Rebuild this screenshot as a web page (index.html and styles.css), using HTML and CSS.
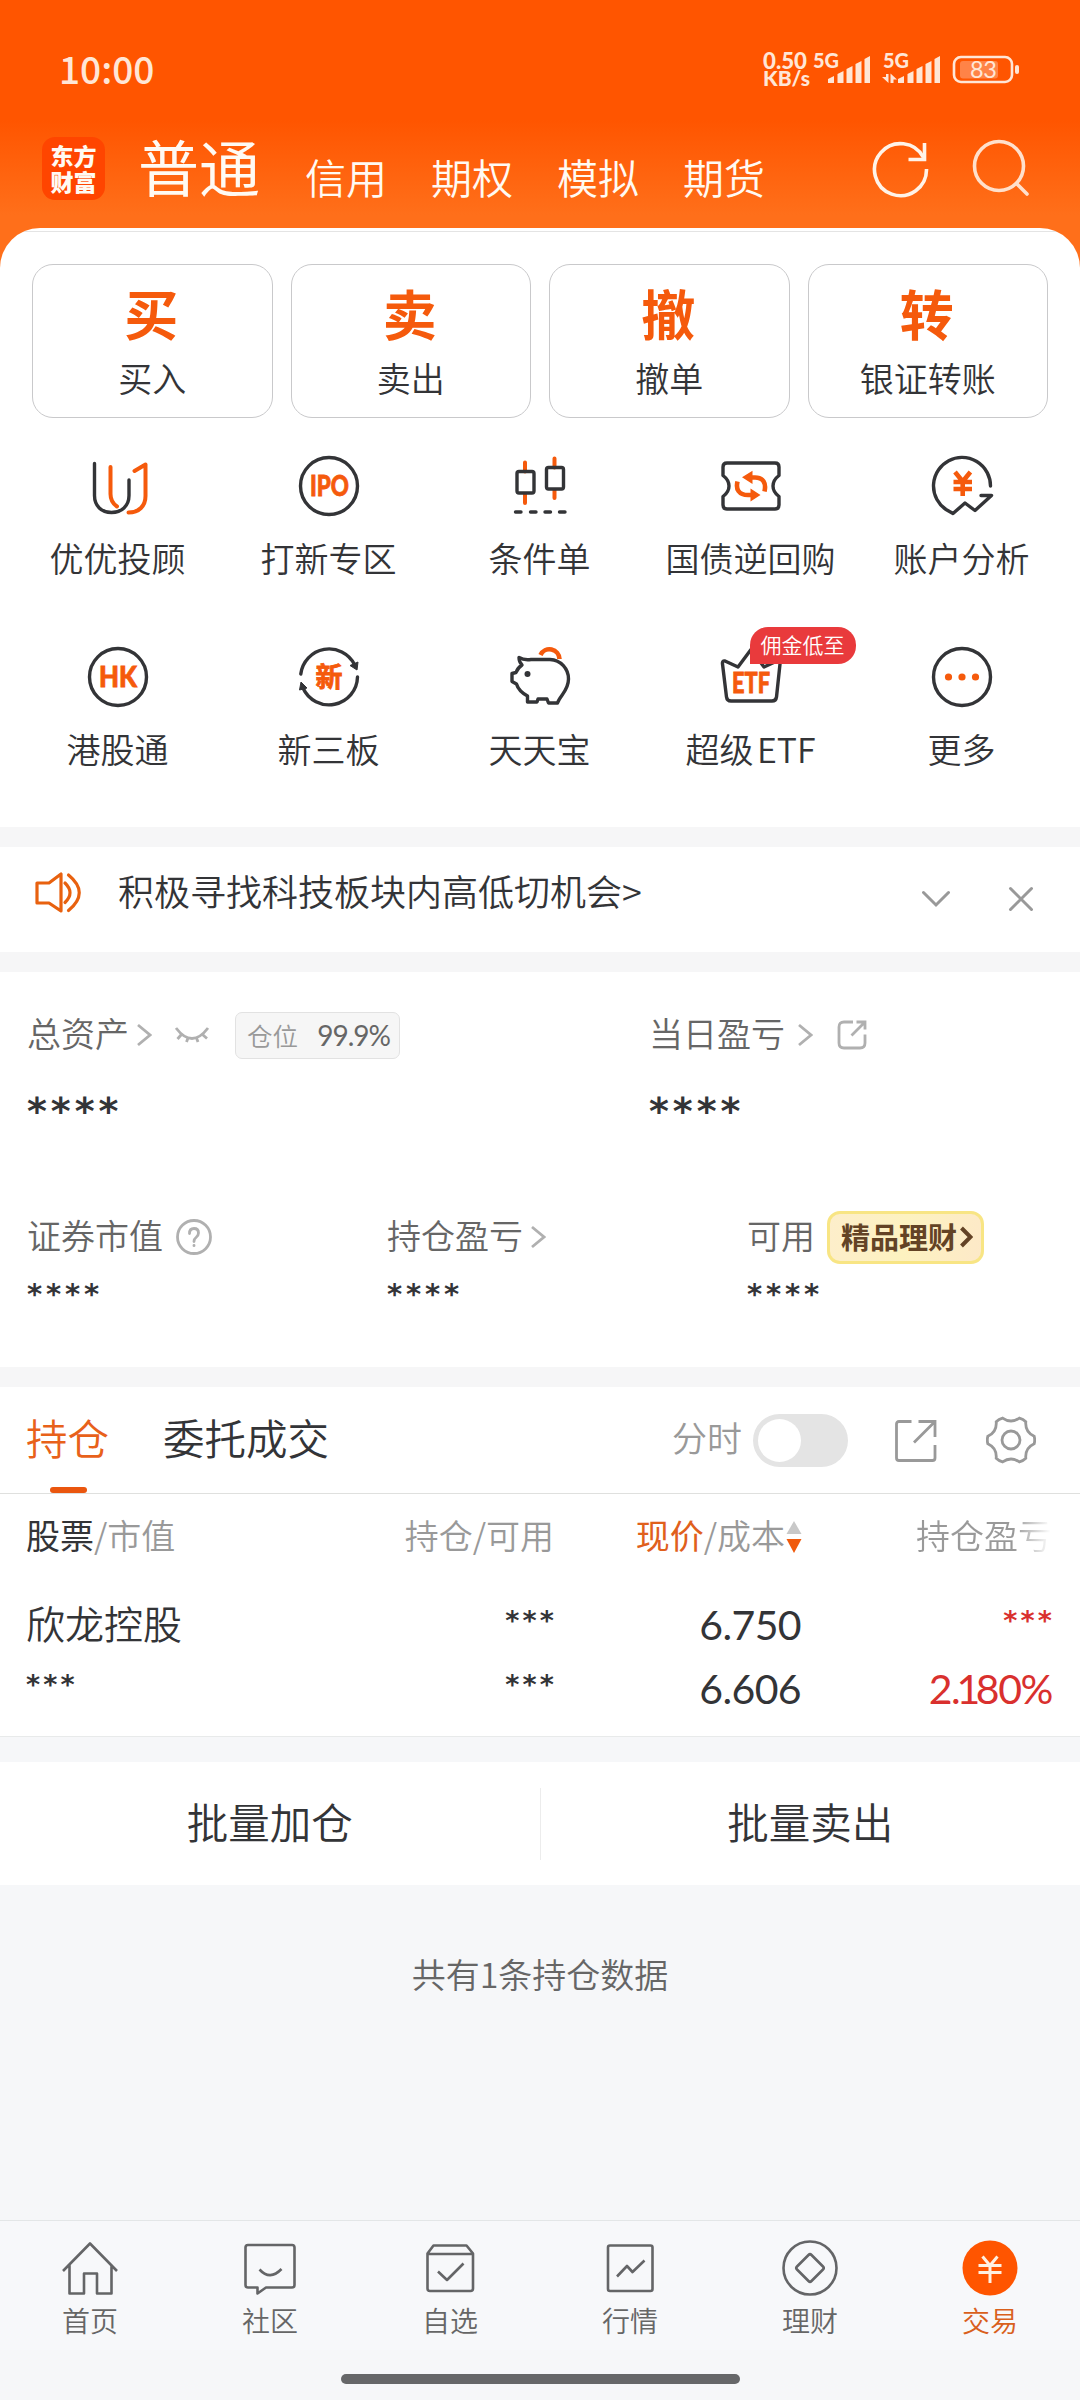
FILE: index.html
```html
<!DOCTYPE html>
<html lang="zh-CN">
<head>
<meta charset="utf-8">
<title>交易</title>
<link rel="stylesheet" href="styles.css">
</head>
<body>
<div class="app">
  <header class="header">
    <div class="status">
      <span class="clock">10:00</span>
      <svg class="status-icons" width="260" height="40" viewBox="0 0 260 40">
        <g class="st-bold">
          <text x="1" y="18.500" font-size="22" textLength="44" lengthAdjust="spacingAndGlyphs">0.50</text>
          <text x="1" y="36" font-size="20" textLength="47" lengthAdjust="spacingAndGlyphs">KB/s</text>
          <text x="51" y="18" font-size="20" textLength="26" lengthAdjust="spacingAndGlyphs">5G</text>
          <text x="121" y="18" font-size="20" textLength="26" lengthAdjust="spacingAndGlyphs">5G</text>
        </g>
        <path fill="#ffe6d6" d="M66 33v-4l6-3v7zM75.500 33V24l6-3v12zM84.500 33V19l6-3v17zM93.500 33V14l6-3v22zM102.500 33V9l5.500-3v27zM136 33v-4l6-3v7zM145.500 33V24l6-3v12zM154.500 33V19l6-3v17zM163.500 33V14l6-3v22zM172.500 33V9l5.500-3v27z"/>
        <path fill="#ffe6d6" d="M124 24h2.500v9l-6.500-6h4zM128.500 33v-9.500l6.500 6h-3.500V33z"/>
        <rect x="192" y="7" width="58" height="25" rx="7" fill="none" stroke="#ffe6d6" stroke-width="2.600"/>
        <rect x="198" y="11" width="38" height="17.500" rx="3" fill="#ff8347"/>
        <rect x="253" y="15" width="4" height="9" rx="2" fill="#ffe6d6"/>
        <text class="st-num" x="208" y="28" font-size="23.500" textLength="27">83</text>
      </svg>
    </div>
    <nav class="topnav">
      <div class="logo"><span>东方</span><span>财富</span></div>
      <span class="cur">普通</span>
      <span class="alt">信用</span><span class="alt">期权</span><span class="alt">模拟</span><span class="alt">期货</span>
      <svg class="refresh" width="60" height="60" viewBox="0 0 60 60" fill="none" stroke="#fff3e8" stroke-width="3.600"><path d="M56.500 30A26 26 0 1 1 53.500 18.500"/><path d="M54.500 4v16.500H38.500"/></svg>
      <svg class="search" width="60" height="60" viewBox="0 0 60 60" fill="none" stroke="#ffe0cc" stroke-width="3.600" stroke-linecap="round"><circle cx="28" cy="27" r="24.500"/><path d="M45.500 44.500L56 55"/></svg>
    </nav>
  </header>

  <section class="sheet">
    <div class="cards">
      <div class="card"><b>买</b><span>买入</span></div>
      <div class="card"><b>卖</b><span>卖出</span></div>
      <div class="card"><b>撤</b><span>撤单</span></div>
      <div class="card"><b>转</b><span>银证转账</span></div>
    </div>
    <div class="grid">
      <div class="item">
        <svg class="ico" viewBox="0 0 60 60"><path class="k" d="M6.500 7.500V39.500C6.500 50 13.500 56.500 23.500 56.500S41 50 41 39.500V24"/><path class="o" d="M22.500 11V38C22.500 44 24.500 47.500 29 50.500M46.500 15L57.500 8.500V40C57.500 50 51 56.500 40.500 56.500"/></svg>
        <span>优优投顾</span></div>
      <div class="item">
        <svg class="ico" viewBox="0 0 60 60"><circle class="k" cx="30" cy="30" r="28.500"/><text class="it" x="11" y="40" textLength="39" lengthAdjust="spacingAndGlyphs">IPO</text></svg>
        <span>打新专区</span></div>
      <div class="item">
        <svg class="ico" viewBox="0 0 60 60"><path class="o" d="M15 6.500v9M15 38v9M44.500 2.500v9M44.500 34v8"/><rect class="k" x="7" y="15.500" width="17" height="21.500" rx="2"/><rect class="k" x="36.500" y="11.500" width="17" height="21.500" rx="2"/><path class="k" d="M5.500 56h5.500M20.500 56h5.500M35 56h5.500M49.500 56H55"/></svg>
        <span>条件单</span></div>
      <div class="item">
        <svg class="ico" viewBox="0 0 60 60"><path class="k" d="M6 7H54Q58 7 58 11V19.500Q52 24 52 30T58 40.500V49Q58 53 54 53H6Q2 53 2 49V40.500Q8 36 8 30T2 19.500V11Q2 7 6 7Z"/><path class="o w" d="M28 21.500H34C42 21.500 45.500 27 43.500 35.500M33 39H27C18 39 14.500 33.500 16.500 25.500"/><path fill="#f55a0c" d="M21 21.300L31.500 14.800V28zM39.500 39L29.500 32.500V45.500z"/></svg>
        <span>国债逆回购</span></div>
      <div class="item">
        <svg class="ico" viewBox="0 0 60 60"><path class="k" d="M58.500 30A28.500 28.500 0 1 0 14 53.500L21 57.500L33 47L43 54.500L59.500 39.500H49"/><path class="o w" d="M23 16l7.700 9.500 7.700-9.500M21.500 26h18.500M21.500 33h18.500M30.700 25v15"/></svg>
        <span>账户分析</span></div>
      <div class="item">
        <svg class="ico" viewBox="0 0 60 60"><circle class="k" cx="30" cy="30" r="28.500"/><text class="it" x="11" y="40" textLength="38" lengthAdjust="spacingAndGlyphs">HK</text></svg>
        <span>港股通</span></div>
      <div class="item">
        <svg class="ico" viewBox="0 0 60 60"><path class="k" d="M1.800 27A28.500 28.500 0 0 1 55.500 17.500M58.500 30A28.500 28.500 0 0 1 4 41"/><path fill="#333437" stroke="#333437" stroke-linejoin="round" d="M58 23L51 18.500L59 15zM2 35L8 41L0.500 43z"/><text class="it cn" x="16.500" y="40">新</text></svg>
        <span>新三板</span></div>
      <div class="item">
        <svg class="ico" viewBox="0 0 60 60"><path class="o w" d="M30.500 8A10 10 0 0 1 49.500 12"/><path class="k" d="M9 10.500Q14 13.500 21 12.500H40C51 13 58.500 22 58.500 32C58.500 44 50 48 47.500 56H38.500L37 52H28L27 55H17.500V49C12 46 8 42 6.500 37L2 34.500V26.500L6 25.500Q7.500 21 12 18Q9 15 9 10.500Z"/><circle cx="17.500" cy="27" r="3" fill="#333437"/></svg>
        <span>天天宝</span></div>
      <div class="item">
        <div class="ico-wrap"><svg class="ico" viewBox="0 0 60 60"><path class="k" d="M4 14L17 20L30 2.500L43 20L56 14Q59.500 13.500 59 17L55.500 50Q55 54 51 54H10Q6 54 5.500 50L1.500 17Q1 13.500 4 14Z"/><text class="it" x="11" y="45.500" textLength="38" lengthAdjust="spacingAndGlyphs">ETF</text></svg><em class="tag">佣金低至</em></div>
        <span>超级 ETF</span></div>
      <div class="item">
        <svg class="ico" viewBox="0 0 60 60"><circle class="k" cx="30" cy="30" r="28.500"/><g fill="#f55a0c"><circle cx="16.500" cy="30" r="3.600"/><circle cx="30" cy="30" r="3.600"/><circle cx="43.500" cy="30" r="3.600"/></g></svg>
        <span>更多</span></div>
    </div>
  </section>

  <section class="notice">
    <svg class="speaker" width="48" height="46" viewBox="0 0 48 46" fill="none" stroke="#e8610f" stroke-width="3.200" stroke-linejoin="round" stroke-linecap="round"><path d="M2 13H14L26 4V41L14 33H2Z"/><path d="M30 13Q40 22.700 30 32.500M33.500 5Q55 22.700 33.500 40.500"/></svg>
    <span class="msg">积极寻找科技板块内高低切机会&gt;</span>
    <svg width="28" height="28" viewBox="0 0 28 28" class="g1"><path d="M1.500 7.500L14 20L26.500 7.500"/></svg>
    <svg width="28" height="28" viewBox="0 0 28 28" class="g1 close"><path d="M3.500 3.500L24.500 24.500M24.500 3.500L3.500 24.500"/></svg>
  </section>

  <section class="assets">
    <div class="pair">
      <div class="cell">
        <div class="lab"><span>总资产</span><svg class="chev" width="16" height="24" viewBox="0 0 16 24"><path d="M2 2L14 12L2 22"/></svg>
          <svg class="eye" width="36" height="24" viewBox="0 0 36 24"><path d="M2 5Q18 26 34 5M7 12L3.500 16M14 15L12.500 19M22.500 15L24 19M29 12L33 15.500"/></svg>
          <span class="pos"><i>仓位</i><em>99.9%</em></span></div>
        <div class="stars big">****</div>
      </div>
      <div class="cell">
        <div class="lab"><span>当日盈亏</span><svg class="chev far" width="16" height="24" viewBox="0 0 16 24"><path d="M2 2L14 12L2 22"/></svg>
          <svg class="share" width="30" height="30" viewBox="0 0 30 30"><path d="M16 2H7Q2 2 2 7V23Q2 28 7 28H23Q28 28 28 23V14.500M14.500 15.500L28 2M19.500 2H28V9.500"/></svg></div>
        <div class="stars big">****</div>
      </div>
    </div>
    <div class="trio">
      <div class="cell">
        <div class="lab"><span>证券市值</span><svg class="help" width="36" height="36" viewBox="0 0 36 36"><circle cx="18" cy="18" r="16.500"/><path d="M13.500 14.500Q13.500 9.500 18 9.500T22.500 14Q22.500 16.500 20 18.500Q18 20 18 22.500"/><path d="M18 26.300v.4"/></svg></div>
        <div class="stars">****</div>
      </div>
      <div class="cell">
        <div class="lab"><span>持仓盈亏</span><svg class="chev" width="16" height="24" viewBox="0 0 16 24"><path d="M2 2L14 12L2 22"/></svg></div>
        <div class="stars">****</div>
      </div>
      <div class="cell">
        <div class="lab"><span>可用</span><span class="gold"><b>精品理财</b><svg width="14" height="24" viewBox="0 0 14 24"><path d="M2.500 3L11.500 12L2.500 21"/></svg></span></div>
        <div class="stars">****</div>
      </div>
    </div>
  </section>

  <section class="holdings">
    <div class="tabs">
      <span class="tab on">持仓</span>
      <span class="tab">委托成交</span>
      <span class="mode">分时</span>
      <span class="switch"><i></i></span>
      <svg class="export" width="44" height="44" viewBox="0 0 44 44"><path d="M17.500 2.500H5Q2.500 2.500 2.500 5V39Q2.500 41.500 5 41.500H38.500Q41 41.500 41 39V26M20 23.500L41 2.500M24.500 2.500H41V18"/></svg>
      <svg class="gear" width="50" height="50" viewBox="0 0 50 50"><path d="M48.200 21.300Q49.200 25 48.200 28.700Q38.900 33 39.800 43.300Q37.200 46 33.400 46.900Q25 41 16.600 46.900Q12.800 46 10.200 43.300Q11.100 33 1.800 28.700Q.8 25 1.800 21.300Q11.100 17 10.200 6.700Q12.800 4 16.600 3.100Q25 9 33.400 3.100Q37.200 4 39.800 6.700Q38.900 17 48.200 21.300Z"/><circle cx="25" cy="25" r="9"/></svg>
    </div>
    <div class="row head">
      <span><b>股票</b>/市值</span>
      <span>持仓/可用</span>
      <span class="price"><b class="hot">现价</b>/成本<svg width="16" height="34" viewBox="0 0 16 34"><path fill="#c8c8c8" d="M8 1L15.500 14H.5z"/><path fill="#f05a0c" d="M8 33L15.500 19H.5z"/></svg></span>
      <span class="fade">持仓盈亏</span>
    </div>
    <div class="row r1">
      <span class="name">欣龙控股</span><span class="st">***</span><span class="num">6.750</span><span class="st red">***</span>
    </div>
    <div class="row r2">
      <span class="st">***</span><span class="st">***</span><span class="num">6.606</span><span class="num red pct">2.<i>1</i>80%</span>
    </div>
  </section>

  <section class="batch"><span>批量加仓</span><i></i><span>批量卖出</span></section>
  <p class="total">共有1条持仓数据</p>

  <footer class="tabbar">
    <div class="tb"><svg viewBox="0 0 60 60"><path d="M3 33L30 5.500L57 33M9.500 27V55.500H24V35.500H37V55.500H51.500V27"/></svg><span>首页</span></div>
    <div class="tb"><svg viewBox="0 0 60 60"><path d="M8 7H52Q54.500 7 54.500 9.500V47Q54.500 49.500 52 49.500H26L17.500 55.500V49.500H8Q5.500 49.500 5.500 47V9.500Q5.500 7 8 7ZM19.500 31.500Q30 43 41.500 31"/></svg><span>社区</span></div>
    <div class="tb"><svg viewBox="0 0 60 60"><path d="M7.500 15.500L13.500 7.500H46.500L53 15.500V50.500Q53 53 50.500 53H10Q7.500 53 7.500 50.500ZM7.500 16H53M18 33.500L27 42L43.500 25.500"/></svg><span>自选</span></div>
    <div class="tb"><svg viewBox="0 0 60 60"><rect x="8" y="7.500" width="44.500" height="45.500" rx="2"/><path d="M17 38.500L27 28L32.500 34L44.500 22.500"/></svg><span>行情</span></div>
    <div class="tb"><svg viewBox="0 0 60 60"><circle cx="30" cy="30" r="26.500"/><path d="M28.500 17Q30 15.500 31.500 17L43 28.500Q44.500 30 43 31.500L31.500 43Q30 44.500 28.500 43L17 31.500Q15.500 30 17 28.500Z"/></svg><span>理财</span></div>
    <div class="tb on"><svg viewBox="0 0 60 60"><circle class="disc" cx="30" cy="30" r="27.500"/><path d="M22.500 18.500L30 27.500L37.500 18.500M18.500 27.500H41.500M18.500 34.500H41.500M30 27.500V45"/></svg><span>交易</span></div>
  </footer>
  <div class="homebar"></div>
</div>
</body>
</html>
```
FILE: styles.css
```css
* { box-sizing: border-box; }
body { margin: 0; background: #f6f7f9; }
.app {
  width: 1080px; height: 2400px; overflow: hidden;
  display: flex; flex-direction: column;
  font-family: "Noto Sans CJK SC", sans-serif; font-weight: 350;
  color: #333437; font-size: 34px; line-height: 1;
  background: linear-gradient(#ff5500 0, #ff5500 120px, #ff6f1a 215px, #ff6f1a 300px, #f6f7f9 300px);
}
.app svg { flex: none; display: block; }
i, em { font-style: normal; }

/* status bar and top navigation */
.header { height: 228px; flex: none; }
.status { height: 120px; padding: 50px 58px 0 59px; display: flex; justify-content: space-between; }
.status-icons { overflow: visible; }
.clock { font: 500 37px/37px "Noto Sans CJK SC", sans-serif; color: #ffe6d6; }
.st-bold { font-family: Lato, sans-serif; font-weight: 900; fill: #ffe6d6; }
.st-num { font-family: Lato, sans-serif; font-weight: 400; fill: #ffe6d6; }
.topnav { height: 108px; display: flex; padding-left: 42px; color: #fffaf3; }
.logo {
  width: 63px; height: 63px; margin-top: 17px; border-radius: 13px; background: #ff4500;
  display: flex; flex-direction: column; align-items: center; padding-top: 5px;
  font-size: 23px; font-weight: 900; line-height: 26px;
}
.cur { font-size: 61px; line-height: 70px; margin: 11px 46px 0 33px; width: 121px; font-weight: 400; white-space: nowrap; }
.alt { font-size: 41px; line-height: 50px; width: 126px; margin-top: 31px; }
.refresh { margin: 19px 0 0 61px; }
.search { margin: 19px 0 0 41px; }

/* rounded sheet with trade shortcuts */
.sheet { background: linear-gradient(#fff 3px, #e4e4e4 3px, #e4e4e4 4px, #fff 4px); border-radius: 40px 40px 0 0; height: 599px; flex: none; padding-top: 36px; }
.cards { display: flex; gap: 18px; padding: 0 32px; }
.card { flex: 1; height: 154px; border: 1px solid #c9c9cb; border-radius: 21px; display: flex; flex-direction: column; align-items: center; }
.card b { font-size: 54px; line-height: 60px; margin: 18px 2px 0 0; color: #f55a0c; font-weight: 700; }
.card span { font-size: 34px; line-height: 40px; margin-top: 15px; }
.grid { display: grid; grid-template-columns: repeat(5, 211px); grid-auto-rows: 191px; padding: 38px 0 0 12px; }
.item { display: flex; flex-direction: column; align-items: center; }
.item > span { font-size: 34px; line-height: 40px; margin-top: 22px; word-spacing: -4px; }
.ico { width: 60px; height: 60px; overflow: visible; }
.ico-wrap { position: relative; }
.k, .o { fill: none; stroke: #333437; stroke-width: 3.4; stroke-linecap: round; stroke-linejoin: round; }
.o { stroke: #f55a0c; stroke-width: 4; }
.o.w { stroke-width: 4.6; stroke-linecap: butt; }
.it { font-family: Lato, sans-serif; font-weight: 900; font-size: 28px; fill: #f55a0c; stroke: #f55a0c; stroke-width: .8; }
.it.cn { font-family: "Noto Sans CJK SC", sans-serif; font-size: 27px; font-weight: 700; }
.tag {
  position: absolute; left: 29px; top: -20px; width: 106px; height: 37px;
  border-radius: 18px 18px 18px 0; background: #e93a3c; color: #fff;
  font-size: 21px; line-height: 35px; text-align: center; white-space: nowrap;
}

/* notice bar */
.notice { height: 145px; flex: none; border: solid #f6f6f7; border-width: 20px 0; background: #fff; display: flex; align-items: flex-start; padding: 23px 45px 0 35px; }
.msg { font-size: 36px; line-height: 40px; margin: 0 auto 0 35px; }
.g1 { fill: none; stroke: #999; stroke-width: 3; stroke-linecap: round; margin-top: 15px; }
.g1.close { margin-left: 57px; }

/* assets summary */
.assets { height: 395px; flex: none; background: #fff; color: #666; padding: 38px 28px 0 27px; }
.pair { display: grid; grid-template-columns: 622px 1fr; height: 202px; }
.trio { display: grid; grid-template-columns: 360px 360px 1fr; }
.lab { display: flex; align-items: center; height: 50px; white-space: nowrap; }
.lab > span:first-child { line-height: 46px; height: 50px; }
.chev, .eye, .share, .help, .export, .gear { fill: none; stroke: #b0b0b0; stroke-width: 2.8; }
.chev { margin-left: 7px; }
.chev.far { margin-left: 12px; }
.eye { margin-left: 22px; }
.share { margin-left: 24px; }
.help { margin-left: 13px; stroke-linecap: round; }
.pos { width: 165px; height: 47px; margin-left: 25px; border: 1px solid #e2e2e2; border-radius: 7px; background: #f6f6f6; display: flex; justify-content: space-between; padding: 0 9px 0 11px; line-height: 43px; font-size: 25.5px; color: #999; }
.pos em { font-family: Lato, sans-serif; font-weight: 400; font-size: 28px; color: #666; line-height: 45px; letter-spacing: -1px; }
.stars, .st { font-family: "DejaVu Sans", sans-serif; font-weight: 700; }
.stars { color: #333437; font-size: 29px; letter-spacing: 3.8px; line-height: 40px; margin-top: 12px; }
.stars.big { font-size: 38px; letter-spacing: 4px; line-height: 50px; margin-top: 26px; }
.gold { margin-left: 12px; width: 157px; height: 53px; border: 3px solid #f8e584; border-radius: 13px; background: linear-gradient(100deg, #fdeecb, #fdf2c0 50%, #fde9c8); display: flex; align-items: center; padding-left: 11px; color: #634325; }
.gold b { font-size: 29px; line-height: 44px; font-weight: 700; margin-top: -3px; }
.gold svg { fill: none; stroke: #634325; stroke-width: 4; margin-left: 2px; }

/* holdings table */
.holdings { height: 370px; flex: none; border: solid #f6f6f7; border-width: 20px 0 0; background: #fff; border-bottom: 1px solid #e8eaea; }
.tabs { height: 107px; border-bottom: 1px solid #dfe0de; display: flex; padding: 0 44px 0 26px; }
.tab { position: relative; font-size: 41.5px; line-height: 50px; padding-top: 25px; margin-right: 54px; }
.tab.on { color: #e8611a; }
.tab.on::after { content: ""; position: absolute; left: 24px; bottom: 0; width: 37px; height: 6px; border-radius: 3px; background: #ea560f; }
.mode { margin-left: auto; font-size: 35px; line-height: 50px; padding-top: 25px; color: #999; }
.switch { width: 95px; height: 53px; margin: 27px 46px 0 11px; border-radius: 27px; background: #e4e4e4; padding: 5px; }
.switch i { display: block; width: 43px; height: 43px; border-radius: 50%; background: #fff; }
.export, .gear { stroke: #999; margin-top: 32px; }
.gear { margin: 28px 0 0 48px; }
.row { display: grid; grid-template-columns: 282px 246px 247px 1fr; padding: 0 28px 0 26px; }
.row > span { text-align: right; white-space: nowrap; }
.row > span:first-child { text-align: left; }
.head { padding-top: 20px; color: #999; line-height: 42px; height: 104px; }
.head b { font-weight: 400; color: #333437; }
.head b.hot { color: #e0601c; }
.price { display: flex; justify-content: flex-end; }
.price svg { margin: 6px -1px 0 1px; }
.fade { background: linear-gradient(90deg, #999 72%, #fff 99%); background-clip: text; -webkit-background-clip: text; color: transparent; width: 136px; justify-self: end; }
.r1, .r2 { height: 64px; line-height: 48px; }
.name { font-size: 39px; }
.num { font-family: Lato, sans-serif; font-weight: 400; font-size: 41px; letter-spacing: -.6px; line-height: 53px; }
.pct { letter-spacing: -1.4px; }
.pct i { margin: 0 -3px; }
.st { font-size: 27px; letter-spacing: 3.1px; line-height: 45px; }
.st:not(:first-child) { margin-right: -3px; }
.red { color: #d9302e; }

/* batch actions and summary line */
.batch { height: 148px; flex: none; border-top: 25px solid #f6f7f9; background: #fff; display: flex; align-items: center; font-size: 41.5px; line-height: 50px; }
.batch span { flex: 1; text-align: center; padding-bottom: 5px; }
.batch i { width: 1px; height: 72px; background: #ececec; }
.total { margin: 0; padding-top: 68px; height: 335px; flex: none; background: #f6f7f9; text-align: center; line-height: 42px; color: #666; }

/* bottom tab bar */
.tabbar { height: 130px; flex: none; border-top: 1px solid #e3e6e7; background: #f7f8fa; display: flex; padding-top: 17px; }
.tb { flex: 1; display: flex; flex-direction: column; align-items: center; font-size: 28px; line-height: 34px; color: #666; }
.tb svg { width: 60px; height: 60px; fill: none; stroke: #646567; stroke-width: 2.6; margin-bottom: 5px; stroke-linejoin: round; }
.tb.on { color: #d9601c; }
.tb.on svg { stroke: #fff0e2; stroke-width: 3; }
.tb.on .disc { fill: #ff5500; stroke: none; }
.homebar { width: 399px; height: 10px; margin: 24px auto 0; border-radius: 5px; background: #666769; }
```
